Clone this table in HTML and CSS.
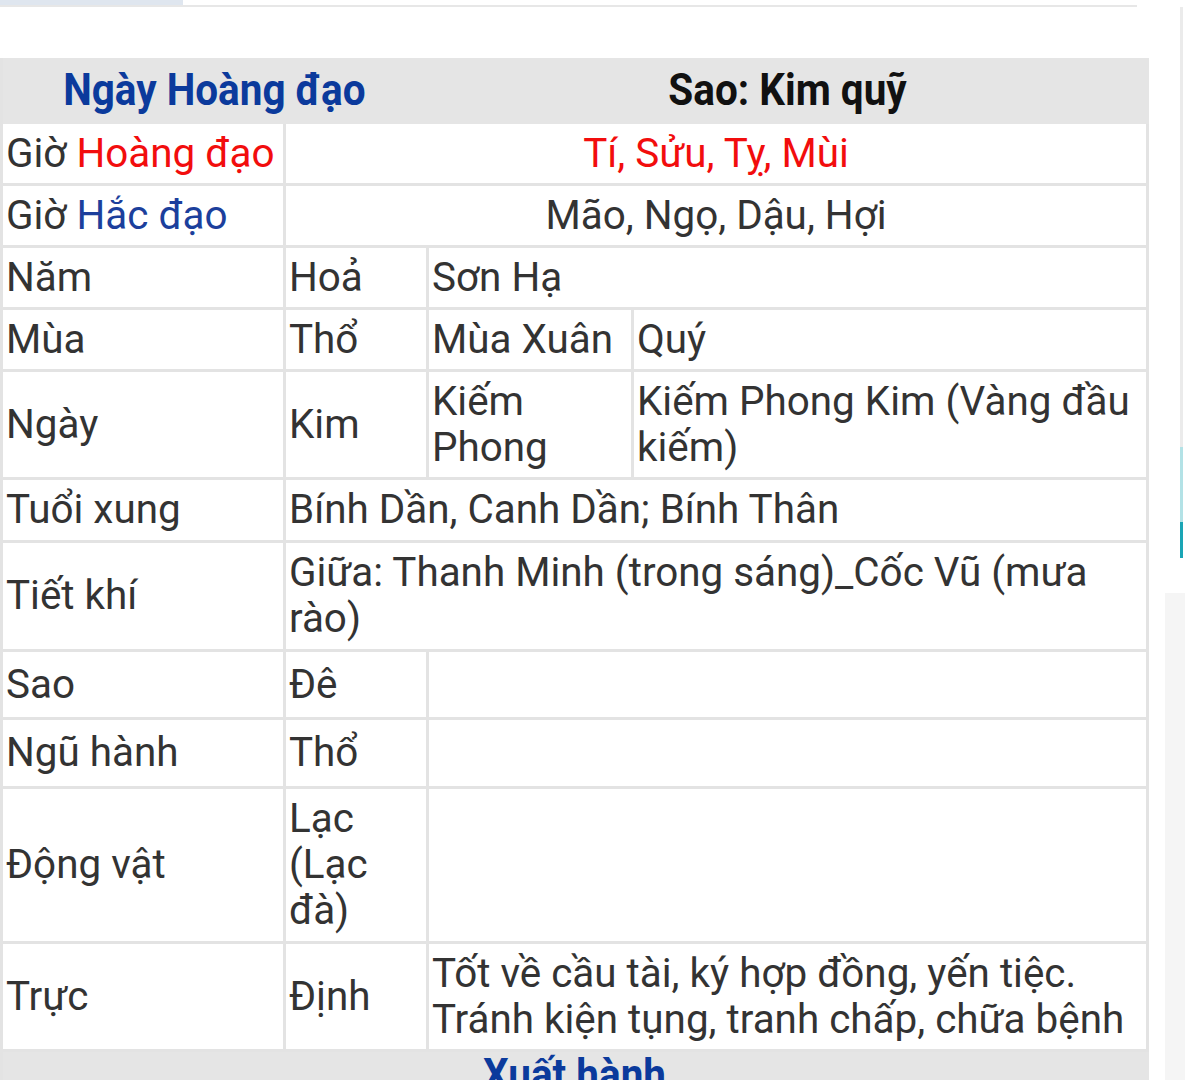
FILE: index.html
```html
<!DOCTYPE html>
<html lang="vi">
<head>
<meta charset="utf-8">
<link rel="stylesheet" href="styles.css">
</head>
<body>
<div class="tabs"><div class="tab-active"></div></div>
<div class="page">
  <main class="main">
    <table class="info">
      <colgroup><col class="c1"><col class="c2"><col class="c3"><col class="c4"></colgroup>
      <tr class="h-head">
        <th colspan="2" class="blue"><span class="narrow">Ngày Hoàng đạo</span></th>
        <th colspan="2"><span class="narrow">Sao: Kim quỹ</span></th>
      </tr>
      <tr class="h62"><td>Giờ <span class="red">Hoàng đạo</span></td><td colspan="3" class="center red">Tí, Sửu, Tỵ, Mùi</td></tr>
      <tr class="h62"><td>Giờ <span class="navy">Hắc đạo</span></td><td colspan="3" class="center">Mão, Ngọ, Dậu, Hợi</td></tr>
      <tr class="h62"><td>Năm</td><td>Hoả</td><td colspan="2">Sơn Hạ</td></tr>
      <tr class="h62"><td>Mùa</td><td>Thổ</td><td>Mùa Xuân</td><td>Quý</td></tr>
      <tr class="h108"><td>Ngày</td><td>Kim</td><td>Kiếm Phong</td><td>Kiếm Phong Kim (Vàng đầu kiếm)</td></tr>
      <tr class="h63"><td>Tuổi xung</td><td colspan="3">Bính Dần, Canh Dần; Bính Thân</td></tr>
      <tr class="h109"><td>Tiết khí</td><td colspan="3">Giữa: Thanh Minh (trong sáng)_Cốc Vũ (mưa rào)</td></tr>
      <tr class="h68"><td>Sao</td><td>Đê</td><td colspan="2"></td></tr>
      <tr class="h69"><td>Ngũ hành</td><td>Thổ</td><td colspan="2"></td></tr>
      <tr class="h155"><td>Động vật</td><td>Lạc (Lạc đà)</td><td colspan="2"></td></tr>
      <tr class="h108"><td>Trực</td><td>Định</td><td colspan="2">Tốt về cầu tài, ký hợp đồng, yến tiệc. Tránh kiện tụng, tranh chấp, chữa bệnh</td></tr>
      <tr class="h-head"><th colspan="4" class="blue top"><span class="narrow">Xuất hành</span></th></tr>
    </table>
  </main>
  <aside class="side">
    <div class="rail">
      <div class="rail-line"></div>
      <div class="rail-light"></div>
      <div class="rail-dark"></div>
    </div>
    <div class="side-panel"></div>
  </aside>
</div>
</body>
</html>
```
FILE: styles.css
```css
html, body {
  margin: 0;
  padding: 0;
  background: #fff;
}
body {
  width: 1185px;
  height: 1080px;
  overflow: hidden;
  font-family: Roboto, "Noto Sans", sans-serif;
  color: #333;
}
.tabs {
  height: 5px;
  width: 1137px;
  border-bottom: 2px solid #e7e7e7;
  display: flex;
}
.tab-active {
  width: 183px;
  background: #dfe6ef;
}
.page {
  display: flex;
  height: 1073px;
}
.main {
  width: 1150px;
  padding-top: 51px;
}
.info {
  border-collapse: separate;
  border-spacing: 0;
  table-layout: fixed;
  width: 1149px;
  border-left: 3px solid #e3e3e3;
  font-size: 40.4px;
}
.c1 { width: 283px; }
.c2 { width: 143px; }
.c3 { width: 205px; }
.c4 { width: 515px; }
.info td, .info th {
  border-right: 3px solid #e3e3e3;
  border-bottom: 3px solid #e3e3e3;
  padding: 0 3px;
  text-align: left;
  vertical-align: middle;
  line-height: 46px;
}
.info th {
  background: #e5e5e5;
  border-color: #e5e5e5;
  text-align: center;
  font-weight: bold;
  font-size: 44px;
  color: #111;
}
.info th.top {
  vertical-align: top;
  padding-top: 0;
}
.narrow {
  display: inline-block;
  transform: scaleX(0.92);
}
.info th.blue { color: #0b3a9c; }
.center { text-align: center !important; }
.red { color: #f20d0d; }
.navy { color: #1c3f9c; }
.h-head { height: 66px; }
.h62 { height: 62px; }
.h63 { height: 63px; }
.h68 { height: 68px; }
.h69 { height: 69px; }
.h108 { height: 108px; }
.h109 { height: 109px; }
.h155 { height: 155px; }
.side {
  flex: 1;
  display: flex;
  flex-direction: column;
}
.rail {
  margin-left: 30px;
  width: 3px;
  display: flex;
  flex-direction: column;
}
.rail-line { height: 440px; background: #ebebeb; }
.rail-light { height: 75px; background: #b3e2e6; }
.rail-dark { height: 36px; background: #1aa5b5; }
.side-panel {
  margin-top: 35px;
  margin-left: 15px;
  flex: 1;
  background: #f5f5f5;
}
```
